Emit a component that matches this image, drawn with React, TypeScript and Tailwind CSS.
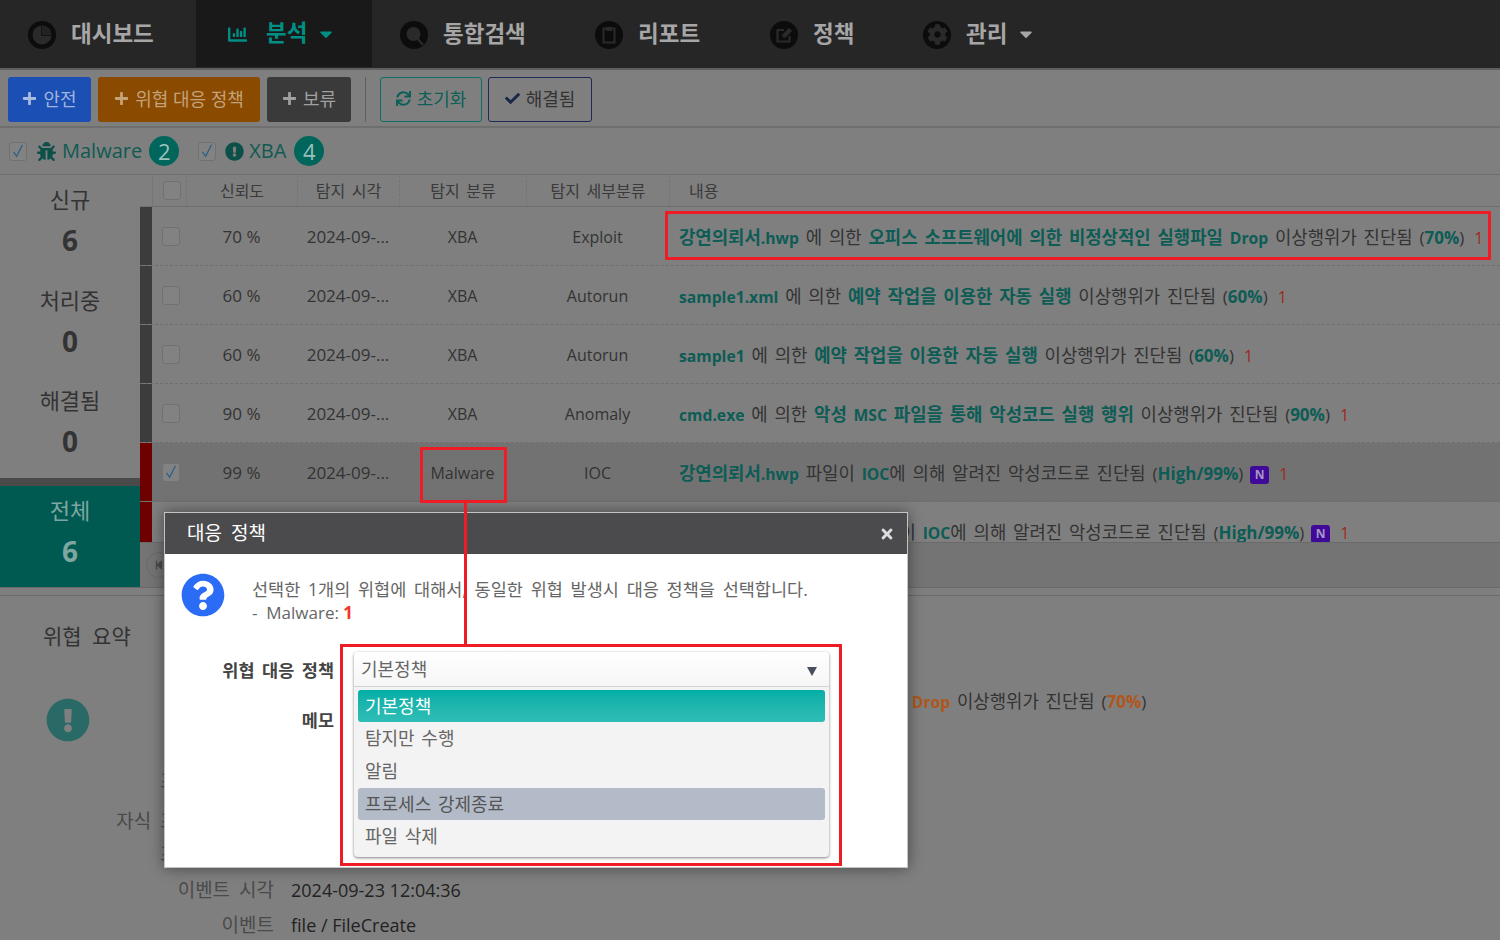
import React from "react";
import { FaBug, FaExclamationCircle, FaPlus, FaSync, FaCheck, FaQuestionCircle, FaCaretDown, FaTimes, FaStepBackward, FaCog, FaChartBar } from "react-icons/fa";

const font = "font-['Open_Sans','Noto_Sans_CJK_KR',sans-serif]";
const G = "#2a2a2a";

function Cb({ checked = false, className = "" }: { checked?: boolean; className?: string }) {
  return (
    <span className={`flex h-[19px] w-[18px] shrink-0 items-center justify-center rounded-[3px] border border-[#6f7370] bg-[#828282] ${className}`}>
      {checked && (
        <svg viewBox="0 0 18 19" className="h-[17px] w-[16px]" fill="none" stroke="#2c5f86" strokeWidth="1.4">
          <path d="M4 10l3.5 5L14 2" />
        </svg>
      )}
    </span>
  );
}

function NavCircle({ children }: { children: React.ReactNode }) {
  return <span className="mt-[1px] flex h-[28px] w-[28px] shrink-0 items-center justify-center rounded-full bg-[#0c0c0c] text-[#2a2a2a]">{children}</span>;
}

function NavItem({ icon, label, caret, className = "" }: { icon: React.ReactNode; label: string; caret?: boolean; className?: string }) {
  return (
    <div className={`flex h-full items-center ${className}`}>
      <NavCircle>{icon}</NavCircle>
      <span className="mb-[1px] ml-[15px] text-[22.5px] font-bold text-[#a6a6a6]">{label}</span>
      {caret && <FaCaretDown className="ml-[9px] text-[20px] text-[#a6a6a6]" />}
    </div>
  );
}

type Row = { pct: string; kind: string; sub: string; bar: string; selected?: boolean; content: React.ReactNode; checked?: boolean };

const B = ({ children }: { children: React.ReactNode }) => <b className="font-bold text-[#0d5c55]">{children}</b>;
const E = ({ children }: { children: React.ReactNode }) => <b className="text-[15.7px] font-bold text-[#0d5c55]">{children}</b>;
const P = ({ children }: { children: React.ReactNode }) => <b className="text-[17px] font-bold text-[#0d5c55]">{children}</b>;
const One = () => <span className="ml-[10px] text-[16px] text-[#9c2a1e]">1</span>;
const N = () => (
  <span className="ml-[7px] inline-flex h-[18px] w-[19px] items-center justify-center rounded-[3px] bg-[#3f0a97] align-middle text-[12px] font-bold text-[#a894c8]">N</span>
);
const Paren = ({ children }: { children: React.ReactNode }) => (
  <span className="text-[17px]">({children})</span>
);

const rows: Row[] = [
  { pct: "70 %", kind: "XBA", sub: "Exploit", bar: "bg-[#3c3c3c]", content: <><B>강연의뢰서</B><E>.hwp</E> 에 의한 <B>오피스 소프트웨어에 의한 비정상적인 실행파일</B> <E>Drop</E> 이상행위가 진단됨 <Paren><P>70%</P></Paren><One /></> },
  { pct: "60 %", kind: "XBA", sub: "Autorun", bar: "bg-[#3c3c3c]", content: <><E>sample1.xml</E> 에 의한 <B>예약 작업을 이용한 자동 실행</B> 이상행위가 진단됨 <Paren><P>60%</P></Paren><One /></> },
  { pct: "60 %", kind: "XBA", sub: "Autorun", bar: "bg-[#3c3c3c]", content: <><E>sample1</E> 에 의한 <B>예약 작업을 이용한 자동 실행</B> 이상행위가 진단됨 <Paren><P>60%</P></Paren><One /></> },
  { pct: "90 %", kind: "XBA", sub: "Anomaly", bar: "bg-[#3c3c3c]", content: <><E>cmd.exe</E> 에 의한 <B>악성</B> <E>MSC</E> <B>파일을 통해 악성코드 실행 행위</B> 이상행위가 진단됨 <Paren><P>90%</P></Paren><One /></> },
  { pct: "99 %", kind: "Malware", sub: "IOC", bar: "bg-[#6e0000]", selected: true, checked: true, content: <><B>강연의뢰서</B><E>.hwp</E> 파일이 <E>IOC</E>에 의해 알려진 악성코드로 진단됨 <Paren><P>High/99%</P></Paren><N /><One /></> },
];

const cols = "grid grid-cols-[12px_34px_111px_102px_127px_143px_1fr] items-center";
const rowText = "text-[17.8px] [word-spacing:2.2px]";

function SideStat({ label, value, className = "" }: { label: string; value: string; className?: string }) {
  return (
    <div className={`flex flex-col items-center ${className}`}>
      <span className="text-[22px] leading-[30px] text-[#333]">{label}</span>
      <span className="mt-[11px] text-[28px] font-bold leading-[30px] text-[#333]">{value}</span>
    </div>
  );
}

const opts = ["탐지만 수행", "알림"];

const details: [string, string, string][] = [
  ["프로세스 경로", "", "mt-[46px]"],
  ["자식 프로세스 경로", "", "mt-[7px]"],
  ["프로세스 명령", "", "mt-0"],
  ["이벤트 시각", "2024-09-23 12:04:36", "mt-[3px]"],
  ["이벤트", "file / FileCreate", "mt-[2px]"],
];

export default function App() {
  return (
    <div className={`relative h-[940px] w-[1500px] overflow-hidden bg-[#7f7f7f] ${font}`}>
      {/* top nav */}
      <nav className="flex h-[70px] border-b-2 border-[#5f5f5f] bg-[#262626] pl-[28px]">
        <NavItem
          className="w-[168px]"
          label="대시보드"
          icon={
            <svg viewBox="0 0 28 28" className="h-[28px] w-[28px]">
              <circle cx="14" cy="14" r="9.5" fill={G} />
              <path d="M14 4.5V14H23.5" fill="none" stroke="#0c0c0c" strokeWidth="1.4" />
              <path d="M14 14V4.5A9.5 9.5 0 0 1 23.5 14z" fill="#222" />
            </svg>
          }
        />
        <div className="flex h-[67px] w-[176px] items-center bg-[#191919] pl-[32px] text-[#008f85]">
          <FaChartBar className="mt-[1px] text-[19px]" />
          <span className="mb-[1px] ml-[19px] text-[22.5px] font-bold">분석</span>
          <FaCaretDown className="ml-[9px] text-[20px]" />
        </div>
        <NavItem
          className="ml-[28px] w-[195px]"
          label="통합검색"
          icon={
            <svg viewBox="0 0 28 28" className="h-[28px] w-[28px]">
              <circle cx="13.5" cy="13" r="7" fill={G} />
              <path d="M17 17l6 7" stroke={G} strokeWidth="2.2" />
            </svg>
          }
        />
        <NavItem
          className="w-[175px]"
          label="리포트"
          icon={
            <svg viewBox="0 0 28 28" className="h-[28px] w-[28px]">
              <rect x="8.5" y="7.5" width="11" height="14" fill="none" stroke={G} strokeWidth="2" />
              <rect x="11" y="6" width="6" height="4" fill={G} />
            </svg>
          }
        />
        <NavItem
          className="w-[153px]"
          label="정책"
          icon={
            <svg viewBox="0 0 28 28" className="h-[28px] w-[28px]">
              <path d="M19.5 15v5.5h-12V9H14" fill="none" stroke={G} strokeWidth="2.2" />
              <path d="M12.5 16.5v-3L19 7l3 3-6.5 6.5z" fill={G} />
            </svg>
          }
        />
        <NavItem label="관리" caret icon={<FaCog className="text-[21px]" />} />
      </nav>

      {/* toolbar */}
      <div className="flex h-[58px] items-center border-b-2 border-[#6f6f6f] pl-[8px] pt-[3px] text-[18px] leading-none [word-spacing:1px]">
        <button className="flex h-[45px] w-[83px] items-center justify-center gap-[6px] rounded-[3px] bg-[#1c4fb3] pb-[2px] text-[#9fb5df]"><FaPlus className="text-[15px] text-[#a9bbdf]" />안전</button>
        <button className="ml-[7px] flex h-[45px] w-[162px] items-center justify-center gap-[6px] rounded-[3px] bg-[#8a4a00] pb-[2px] text-[#c4a27a]"><FaPlus className="text-[15px]" />위협 대응 정책</button>
        <button className="ml-[7px] flex h-[45px] w-[84px] items-center justify-center gap-[6px] rounded-[3px] bg-[#3a3a3a] pb-[2px] text-[#a0a0a0]"><FaPlus className="text-[15px]" />보류</button>
        <span className="ml-[14px] h-[45px] w-[1px] bg-[#5f5f5f]" />
        <button className="ml-[14px] flex h-[45px] w-[102px] items-center justify-center gap-[6px] rounded-[3px] border border-[#0f6f68] pb-[2px] text-[#0f5f58]"><FaSync className="text-[15px]" />초기화</button>
        <button className="ml-[6px] flex h-[45px] w-[104px] items-center justify-center gap-[6px] rounded-[3px] border border-[#1f2a55] pb-[2px] text-[#333]"><FaCheck className="text-[15px] text-[#1a2648]" />해결됨</button>
      </div>

      {/* filter row */}
      <div className="flex h-[47px] items-center border-b border-[#6f6f6f] pl-[9px] text-[20px] text-[#0f5a53]">
        <Cb checked />
        <FaBug className="ml-[10px] text-[19px] text-[#0d4f49]" />
        <span className="ml-[6px]">Malware</span>
        <span className="ml-[7px] flex h-[30px] w-[30px] items-center justify-center rounded-full bg-[#00665c] text-[22px] text-[#9cc0bb]">2</span>
        <Cb checked className="ml-[19px]" />
        <FaExclamationCircle className="ml-[9px] text-[19px] text-[#0d4f49]" />
        <span className="ml-[5px]">XBA</span>
        <span className="ml-[8px] flex h-[30px] w-[30px] items-center justify-center rounded-full bg-[#00665c] text-[22px] text-[#9cc0bb]">4</span>
      </div>

      {/* main split */}
      <div className="flex h-[413px] border-b border-[#6a6a6a]">
        <aside className="flex w-[140px] shrink-0 flex-col">
          <div className="h-[303px] pt-[9px]">
            <SideStat label="신규" value="6" />
            <SideStat label="처리중" value="0" className="mt-[30px]" />
            <SideStat label="해결됨" value="0" className="mt-[29px]" />
          </div>
          <div className="h-[8px] bg-[#4a4a4a]" />
          <div className="flex flex-1 flex-col items-center bg-[#005a52] pt-[9px] text-[#7fa6a1]">
            <span className="text-[22px] leading-[30px]">전체</span>
            <span className="mt-[11px] text-[28px] font-bold leading-[30px]">6</span>
          </div>
        </aside>

        <section className="min-w-0 flex-1 text-[17px] text-[#333]">
          <div className={`${cols} h-[32px] border-b border-[#6f6f6f] text-[16px] text-[#3a3a3a] [word-spacing:2.5px]`}>
            <span className="h-full bg-[#7f7f7f]" />
            <span className="flex h-full items-center border-l border-[#757575] pl-[10px]"><Cb className="h-[18px]" /></span>
            <span className="border-l border-dashed border-[#757575] pt-[2px] text-center leading-[29px]">신뢰도</span>
            <span className="border-l border-dashed border-[#757575] pt-[2px] text-center leading-[29px]">탐지 시각</span>
            <span className="border-l border-dashed border-[#757575] pt-[2px] text-center leading-[29px]">탐지 분류</span>
            <span className="border-l border-dashed border-[#757575] pt-[2px] text-center leading-[29px]">탐지 세부분류</span>
            <span className="border-l border-dashed border-[#757575] pl-[19px] pt-[2px] leading-[29px]">내용</span>
          </div>
          {rows.map((r, i) => (
            <div key={i} className={`${cols} h-[59px] border-b border-dashed border-[#6f6f6f] ${r.selected ? "bg-[#727272]" : ""}`}>
              <span className={`h-full ${r.bar}`} />
              <span className="pl-[10px]"><Cb checked={r.checked} /></span>
              <span className="pt-[2px] text-center">{r.pct}</span>
              <span className="pt-[2px] text-center">2024-09-...</span>
              <span className="pt-[2px] text-center text-[16px]">{r.kind}</span>
              <span className="pt-[2px] text-center text-[16px]">{r.sub}</span>
              <span className={`whitespace-nowrap pl-[10px] pt-[3px] ${rowText}`}>{r.content}</span>
            </div>
          ))}
          <div className={`${cols} h-[41px] overflow-hidden border-b border-[#6a6a6a]`}>
            <span className="h-full bg-[#6e0000]" />
            <span />
            <span /><span /><span /><span />
            <span className={`whitespace-nowrap pl-[71px] pt-[17px] ${rowText}`}><B>강연의뢰서</B><E>.hwp</E> 파일이 <E>IOC</E>에 의해 알려진 악성코드로 진단됨 <Paren><P>High/99%</P></Paren><N /><One /></span>
          </div>
          <div className="flex h-[44px] items-center bg-[#747474] pl-[6px]">
            <span className="flex h-[26px] w-[26px] items-center justify-center rounded-full border border-[#6a6a6a] text-[10px] text-[#4a4a4a]"><FaStepBackward /></span>
          </div>
        </section>
      </div>

      {/* summary */}
      <div className="mt-[7px] flex h-[345px] border-t border-[#6a6a6a]">
        <div className="w-[140px] shrink-0 pl-[43px] pt-[26px]">
          <div className="whitespace-nowrap text-[21px] leading-[28px] text-[#333] [word-spacing:5px]">위협 요약</div>
          <FaExclamationCircle className="ml-[3px] mt-[48px] text-[44px] text-[#2a6a66]" />
        </div>
        <div className="flex-1 pt-[88px]">
          <div className={`h-[35px] whitespace-nowrap pl-[221px] leading-[35px] text-[#333] ${rowText}`}>
            <b className="font-bold text-[#b0561a]">강연의뢰서<span className="text-[15.7px]">.hwp</span></b> 에 의한 <b className="font-bold text-[#b0561a]">오피스 소프트웨어에 의한 비정상적인 실행파일 <span className="text-[15.7px]">Drop</span></b> 이상행위가 진단됨 <span className="text-[17px]">(<b className="font-bold text-[#b0561a]">70%</b>)</span>
          </div>
          {details.map(([l, v, m]) => (
            <div key={l} className={`grid h-[33px] grid-cols-[134px_1fr] gap-x-[17px] leading-[33px] ${m}`}>
              <span className="flex justify-end whitespace-nowrap text-[19px] text-[#4a4a4a] [word-spacing:4px]">{l}</span>
              <span className="text-[18px] text-[#222]">{v}</span>
            </div>
          ))}
        </div>
      </div>

      {/* modal */}
      <div className="absolute left-[164px] top-[512px] flex h-[356px] w-[744px] flex-col border border-[#c4c4c4] bg-white shadow-[0_0_14px_rgba(0,0,0,0.45)]">
        <div className="flex h-[41px] shrink-0 items-center justify-between bg-[#4b4b4d] pl-[22px] pr-[12px] text-[19px] text-white [word-spacing:4px]">
          <span>대응 정책</span>
          <FaTimes className="text-[16px] text-[#ddd]" />
        </div>
        <div className="flex flex-1 flex-col pl-[16px]">
          <div className="mt-[19px] flex h-[44px]">
            <FaQuestionCircle className="text-[44px] text-[#2a6cf5]" />
            <div className="ml-[27px] mt-[4px] whitespace-nowrap text-[17.5px] leading-[24px] text-[#666] [word-spacing:3.2px]">
              <div>선택한 1개의 위협에 대해서, 동일한 위협 발생시 대응 정책을 선택합니다.</div>
              <div className="text-[17px] [word-spacing:0]">- &nbsp;Malware: <b className="font-bold text-[#f0362a]">1</b></div>
            </div>
          </div>
          <div className="mt-[35px] flex">
            <div className="w-[153px] shrink-0 text-right text-[17.5px] font-bold text-[#444] [word-spacing:3px]">
              <div className="mt-[5px] leading-[26px]">위협 대응 정책</div>
              <div className="mt-[24px] leading-[26px]">메모</div>
            </div>
            <div className="ml-[20px] w-[475px] rounded-[4px] bg-[#f3f3f3] text-[18px] text-[#666] shadow-[0_1px_3px_rgba(0,0,0,0.5)] [word-spacing:2px]">
              <div className="flex h-[35px] items-center justify-between rounded-t-[4px] border-b border-[#d4d4d8] bg-linear-to-b from-white to-[#f6f6f6] pl-[7px] pr-[12px]">
                <span>기본정책</span>
                <svg viewBox="0 0 10 9" className="mt-[5px] h-[9px] w-[10px]" fill="#4a4f5c"><path d="M0 0h10L5 9z" /></svg>
              </div>
              <div className="flex h-[170px] flex-col px-[4px] pt-[3px]">
                <div className="flex h-[32px] items-center rounded-[3px] bg-linear-to-b from-[#00aea6] to-[#2fbdb7] pl-[7px] text-white">기본정책</div>
                {opts.map((o) => (
                  <div key={o} className="flex h-[33px] items-center pl-[7px]">{o}</div>
                ))}
                <div className="flex h-[32px] items-center rounded-[3px] bg-[#b3bac8] pl-[7px] text-[#555]">프로세스 강제종료</div>
                <div className="flex h-[33px] items-center pl-[7px]">파일 삭제</div>
              </div>
            </div>
          </div>
        </div>
      </div>

      {/* annotations */}
      <div className="absolute left-[665px] top-[211px] h-[49px] w-[826px] border-[3px] border-[#ee1c25]" />
      <div className="absolute left-[420px] top-[447px] h-[56px] w-[87px] border-[3px] border-[#ee1c25]" />
      <div className="absolute left-[464px] top-[502px] h-[143px] w-[3px] bg-[#ee1c25]" />
      <div className="absolute left-[340px] top-[644px] h-[222px] w-[502px] border-[3px] border-[#ee1c25]" />
    </div>
  );
}
